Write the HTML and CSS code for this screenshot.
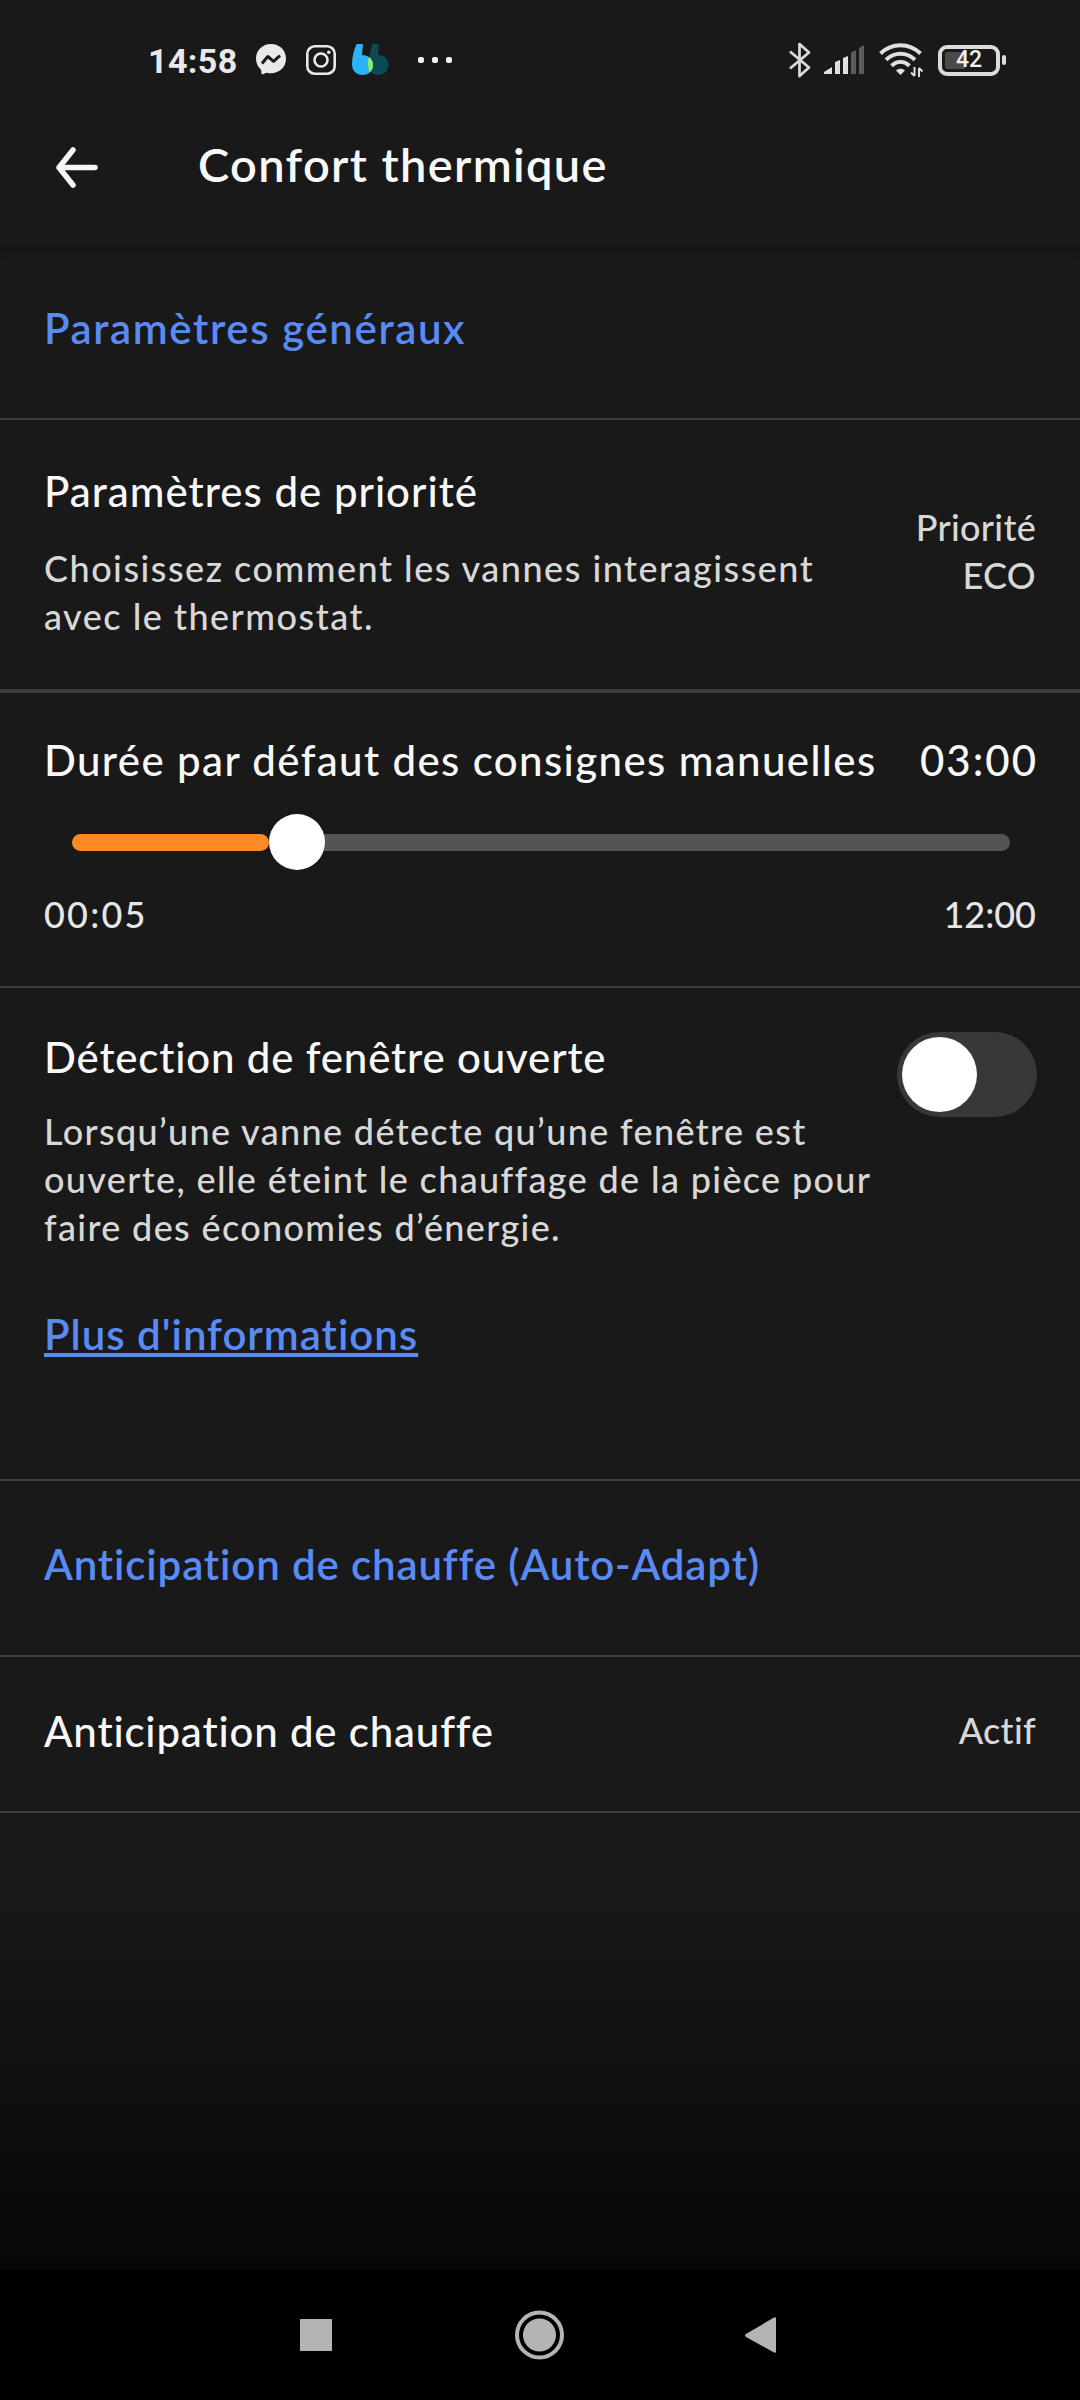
FILE: index.html
```html
<!DOCTYPE html>
<html lang="fr">

<head>
    <meta charset="UTF-8" />
    <title>Confort thermique</title>
    <link rel="stylesheet" href="styles.css">
</head>

<body>
    <div class="status-bar">
        <div class="status-left">
            <span class="clock">14:58</span>
            <svg class="ic-messenger" width="30" height="32" viewBox="0 0 30 32">
                <path fill="#e9e9e9" d="M15 0C6.500 0 0 6.200 0 14.600c0 4.400 1.800 8.200 4.800 10.800.3.300.4.600.4 1l.1 2.700c0 .9.900 1.400 1.700 1.100l3-1.300c.3-.1.500-.1.800-.1 1.300.4 2.700.5 4.200.5 8.500 0 15-6.200 15-14.700S23.500 0 15 0z" />
                <path fill="none" stroke="#1a1a1a" stroke-width="3" stroke-linejoin="round" d="M6 19.500l5.800-7 5.800 4.800 6.400-5.800" />
            </svg>
            <svg class="ic-insta" width="30" height="30" viewBox="0 0 30 30" fill="none" stroke="#e9e9e9">
                <rect x="1.300" y="1.300" width="27.400" height="27.400" rx="7.500" stroke-width="2.600" />
                <circle cx="15" cy="15" r="6.500" stroke-width="2.600" />
                <circle cx="22.800" cy="7.200" r="1.800" fill="#e9e9e9" stroke="none" />
            </svg>
            <svg class="ic-quote" width="37" height="32" viewBox="0 0 37 32">
                <path fill="#0b4a55" d="M20.500 0h6.500l-1 11c6 0 10.500 4 10.500 10s-4.500 10-10.500 10-9-4-9-10c0-8 1.500-15 3.500-21z" />
                <path fill="#2bb3f7" d="M4.500 0H11l-1 11c6 0 11 4 11 10s-4.500 10-10.500 10S0 27 0 20C0 13 2 6 4.500 0z" />
                <path fill="#8ee86c" d="M17 13c2.600 1.900 4 4.700 4 8s-1.200 5.500-3.200 7.300C15.500 24 15.300 17 17 13z" />
            </svg>
            <span class="dots"><i></i><i></i><i></i></span>
        </div>
        <div class="status-right">
            <svg class="ic-bt" width="24" height="36" viewBox="0 0 24 36" fill="none" stroke="#dcdcdc" stroke-width="2.700" stroke-linejoin="round">
                <path d="M2 9.500l19 16L11.500 34V2L21 10.500l-19 16" />
            </svg>
            <svg class="ic-signal" width="41" height="30" viewBox="0 0 41 30">
                <path fill="#e0e0e0" d="M0 29v-2l8-5v7zM11 29V17l5-2v14zM19 29V13l5-2v18z" />
                <path fill="#5c5c5c" d="M27 29V7.500l5-2.500v24zM35 29V3l5-3v29z" />
            </svg>
            <svg class="ic-wifi" width="44" height="34" viewBox="0 0 44 34" fill="none" stroke="#e0e0e0" stroke-width="4">
                <path d="M1.500 10.500c11.500-11 28.500-11 40 0M7 16.800c8.500-8 20.500-8 29 0M12.500 22.800c5.500-5 12.500-5 18 0" />
                <path fill="#e0e0e0" stroke="none" d="M17 27.500c2.500-2.500 6.500-2.500 9 0L21.500 32z" />
                <path stroke-width="2" d="M35.500 24v9M40 25v9M32 29.500l3.500 3.500M43.500 28.500L40 25" />
            </svg>
            <span class="battery"><b>42</b></span>
            <span class="battery-tip"></span>
        </div>
    </div>

    <header class="app-bar">
        <svg class="back" width="44" height="44" viewBox="0 0 44 44" fill="none" stroke="#f5f5f5" stroke-width="5.500" stroke-linecap="round" stroke-linejoin="round">
            <path d="M18 4L4 21.500 18 39M4 21.500h36" />
        </svg>
        <h1>Confort thermique</h1>
    </header>

    <main>
        <div class="row section">
            <h2>Paramètres généraux</h2>
        </div>

        <div class="row priority">
            <div class="text">
                <h3>Paramètres de priorité</h3>
                <p>Choisissez comment les vannes interagissent<br>avec le thermostat.</p>
            </div>
            <div class="value">Priorité<br>ECO</div>
        </div>

        <div class="row duration">
            <div class="line">
                <h3>Durée par défaut des consignes manuelles</h3>
                <h3 class="time">03:00</h3>
            </div>
            <div class="slider">
                <div class="fill"></div>
                <div class="thumb"></div>
                <div class="rest"></div>
            </div>
            <div class="line limits">
                <span class="min">00:05</span>
                <span>12:00</span>
            </div>
        </div>

        <div class="row window">
            <div class="text">
                <h3>Détection de fenêtre ouverte</h3>
                <p>Lorsqu’une vanne détecte qu’une fenêtre est<br>ouverte, elle éteint le chauffage de la pièce pour<br>faire des économies d’énergie.</p>
                <a href="#">Plus d'informations</a>
            </div>
            <div class="toggle"><div class="knob"></div></div>
        </div>

        <div class="row section second">
            <h2>Anticipation de chauffe (Auto-Adapt)</h2>
        </div>

        <div class="row heating">
            <h3>Anticipation de chauffe</h3>
            <div class="value">Actif</div>
        </div>
    </main>

    <div class="fade"></div>

    <nav class="nav-bar">
        <svg width="580" height="60" viewBox="250 2305 580 60" fill="#b4b4b4">
            <rect x="300" y="2319" width="32" height="32" rx="1" />
            <circle cx="539.500" cy="2335" r="16.500" />
            <circle cx="539.500" cy="2335" r="22.500" fill="none" stroke="#b4b4b4" stroke-width="4" />
            <path d="M746 2334l28-16.500q2-1 2 1v33q0 2-2 1L746 2337q-2-1.500 0-3z" />
        </svg>
    </nav>
</body>

</html>
```
FILE: styles.css
```css
:root {
    --bg: #191919;
    --line: #3c3c3c;
    --blue: #5a8bf5;
    --text: #f8f8f8;
    --muted: #d8d8d8;
    --orange: #ff8a24
}

* {
    box-sizing: border-box
}

body {
    margin: 0;
    width: 1080px;
    height: 2400px;
    overflow: hidden;
    display: flex;
    flex-direction: column;
    background: var(--bg);
    color: var(--text);
    font-family: Lato, "Open Sans", sans-serif
}

h1,
h2,
h3,
p {
    margin: 0
}

svg {
    display: block;
    flex: none
}

/* status bar */
.status-bar {
    flex: none;
    height: 120px;
    padding: 0 74px 0 148px;
    display: flex;
    align-items: center;
    justify-content: space-between
}

.status-left,
.status-right {
    display: flex;
    align-items: center
}

.clock {
    font: 700 34px/40px Roboto, sans-serif;
    letter-spacing: .4px;
    color: #e9e9e9;
    margin-top: 2px
}

.ic-messenger {
    margin-left: 18px
}

.ic-insta {
    margin-left: 20px
}

.ic-quote {
    margin-left: 16px
}

.dots {
    display: flex;
    gap: 8px;
    margin-left: 29px
}

.dots i {
    width: 6px;
    height: 6px;
    border-radius: 2px;
    background: #f0f0f0
}

.ic-signal {
    margin-left: 12px
}

.ic-wifi {
    margin-left: 14px
}

.battery {
    width: 62px;
    height: 31px;
    margin-left: 15px;
    border: 4px solid #dcdcdc;
    border-radius: 9px;
    background: linear-gradient(90deg, #4a4a4a 42%, transparent 42%) content-box;
    padding: 3px;
    display: flex;
    align-items: center;
    justify-content: center
}

.battery b {
    font: 500 23px/22px Roboto, sans-serif;
    color: #f0f0f0
}

.battery-tip {
    width: 4px;
    height: 10px;
    margin-left: 2px;
    border-radius: 2px;
    background: #dcdcdc
}

/* title */
.app-bar {
    flex: none;
    height: 125px;
    padding: 16px 55px 0;
    display: flex;
    box-shadow: 0 4px 12px rgba(0, 0, 0, .2);
    clip-path: inset(0 0 -20px)
}

.back {
    margin-top: 10px
}

h1 {
    margin-left: 99px;
    font-size: 47px;
    line-height: 56px;
    font-weight: 600;
    letter-spacing: 1.35px
}

h2,
h3,
a {
    font-size: 42px;
    line-height: 50px;
    font-weight: 500;
    white-space: nowrap
}

h2,
a {
    color: var(--blue);
    font-weight: 600;
    letter-spacing: 1.6px
}

h3 {
    letter-spacing: 1px
}

/* settings rows */
.row {
    display: flex;
    justify-content: space-between;
    padding: 0 44px;
    border-bottom: 2px solid var(--line)
}

.section {
    height: 175px;
    padding-top: 58px
}

.section.second {
    height: 176px
}

.second h2 {
    letter-spacing: .87px
}

p,
.value,
.limits {
    font-size: 36px;
    line-height: 48px;
    font-weight: 500;
    color: var(--muted);
    white-space: nowrap
}

.value {
    text-align: right;
    letter-spacing: .3px
}

.priority {
    height: 273px;
    padding-top: 46px;
    border-bottom-width: 4px
}

.priority p {
    margin-top: 28px;
    letter-spacing: 1.5px
}

.priority .value {
    margin-top: 37px
}

.duration {
    height: 295px;
    padding-top: 42px;
    flex-direction: column;
    justify-content: flex-start
}

.duration h3 {
    letter-spacing: 1.38px
}

.duration .time {
    margin-right: -2px;
    letter-spacing: 2px
}

.line {
    display: flex;
    justify-content: space-between
}

.slider {
    display: flex;
    align-items: center;
    height: 56px;
    margin: 29px 26px 0 28px
}

.fill,
.rest {
    height: 17px;
    border-radius: 9px;
    background: var(--orange)
}

.fill {
    width: 197px
}

.rest {
    flex: 1;
    margin-left: -2px;
    border-radius: 0 9px 9px 0;
    background: #545454
}

.thumb {
    width: 56px;
    height: 56px;
    border-radius: 50%;
    background: #fff;
    z-index: 1
}

.limits {
    margin-top: 20px;
    color: #e6e6e6
}

.limits .min {
    letter-spacing: 2.2px
}

.window {
    height: 493px;
    padding-top: 44px
}

.window h3 {
    letter-spacing: .83px
}

.window p {
    margin-top: 25px;
    letter-spacing: 1.35px
}

.window a {
    display: inline-block;
    margin-top: 58px;
    letter-spacing: 1px;
    text-decoration: underline;
    text-decoration-thickness: 4px;
    text-underline-offset: 3px;
    text-decoration-skip-ink: none
}

.toggle {
    width: 140px;
    height: 85px;
    margin: 0 -1px 0 0;
    padding: 5px;
    border-radius: 43px;
    background: #383839
}

.knob {
    width: 75px;
    height: 75px;
    border-radius: 50%;
    background: #fff
}

.heating {
    height: 156px;
    padding-top: 49px
}

.heating h3 {
    letter-spacing: .82px
}

.fade {
    flex: 1;
    min-height: 0;
    background: linear-gradient(#191919 15%, #070707)
}

.nav-bar {
    flex: none;
    height: 130px;
    padding: 35px 250px 0;
    background: #000
}
```
